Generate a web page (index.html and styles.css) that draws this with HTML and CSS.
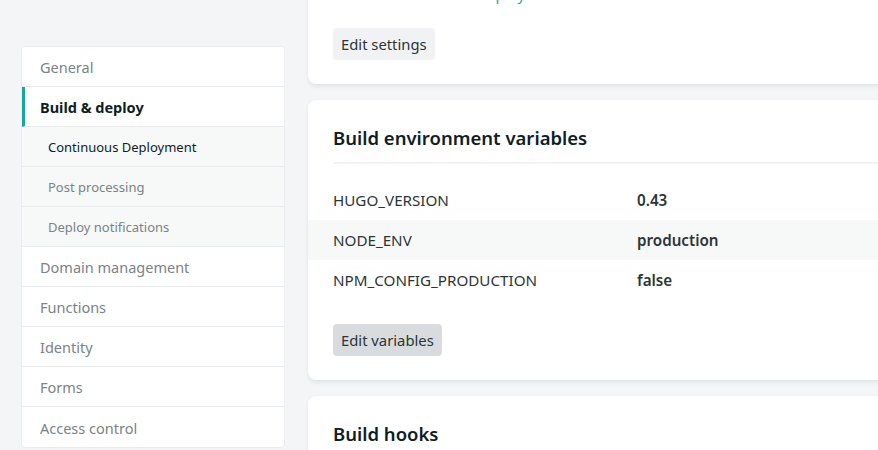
FILE: index.html
```html
<!DOCTYPE html>
<html lang="en">
<head>
<meta charset="utf-8">
<title>Build &amp; deploy settings</title>
<link rel="stylesheet" href="styles.css">
</head>
<body>
<div class="layout">
  <nav class="sidebar">
    <a class="nav-item">General</a>
    <a class="nav-item active">Build &amp; deploy</a>
    <a class="nav-sub current">Continuous Deployment</a>
    <a class="nav-sub">Post processing</a>
    <a class="nav-sub">Deploy notifications</a>
    <a class="nav-item">Domain management</a>
    <a class="nav-item">Functions</a>
    <a class="nav-item">Identity</a>
    <a class="nav-item">Forms</a>
    <a class="nav-item last">Access control</a>
  </nav>
  <main class="content">
    <section class="card card-top">
      <p class="top-line"><span class="plain">Main branch linked: </span><a class="link">deploy</a></p>
      <button class="btn">Edit settings</button>
    </section>
    <section class="card">
      <h2 class="card-title">Build environment variables</h2>
      <div class="vars">
        <div class="var-row"><span class="var-key">HUGO_VERSION</span><span class="var-val">0.43</span></div>
        <div class="var-row striped"><span class="var-key">NODE_ENV</span><span class="var-val">production</span></div>
        <div class="var-row"><span class="var-key">NPM_CONFIG_PRODUCTION</span><span class="var-val">false</span></div>
      </div>
      <button class="btn btn-hover">Edit variables</button>
    </section>
    <section class="card">
      <h2 class="card-title plain-title">Build hooks</h2>
    </section>
  </main>
</div>
</body>
</html>
```

FILE: styles.css
```css
html, body {
  margin: 0;
  padding: 0;
  height: 450px;
  overflow: hidden;
}
body {
  background: #f3f5f6;
  font-family: "Noto Sans", "Open Sans", sans-serif;
  color: #0e1e25;
}
.layout {
  display: flex;
  align-items: flex-start;
  gap: 24px;
  padding-left: 22px;
}
.sidebar {
  width: 262px;
  flex: none;
  margin-top: 47px;
  background: #fff;
  border-radius: 4px;
  box-shadow: 0 0 0 1px #eaeced;
  display: flex;
  flex-direction: column;
  overflow: hidden;
}
.nav-item, .nav-sub {
  display: flex;
  align-items: center;
  padding-top: 1px;
  box-sizing: border-box;
  height: 40px;
  border-bottom: 1px solid #e9ebec;
  text-decoration: none;
}
.nav-item {
  padding-left: 18px;
  font-size: 14.5px;
  color: #7a8387;
  background: #fff;
}
.nav-item.last { border-bottom: none; }
.nav-item.active {
  color: #0e1e25;
  font-weight: 700;
  padding-left: 15px;
  border-left: 3px solid #15a99d;
}
.nav-sub {
  padding-left: 26px;
  font-size: 13px;
  color: #7a8387;
  background: #f7f8f8;
}
.nav-sub.current { color: #0e1e25; }
.content {
  width: 640px;
  flex: none;
  display: flex;
  flex-direction: column;
  gap: 16px;
  margin-top: -16px;
}
.card {
  background: #fff;
  border-radius: 8px;
  box-shadow: 0 2px 4px rgba(14, 30, 37, 0.08);
  padding: 24px 0 24px 0;
}
.card-top {
  padding-top: 0;
  padding-bottom: 24px;
}
.top-line {
  margin: 0 0 24px 27px;
  font-size: 15px;
  line-height: 20px;
  height: 20px;
}
.plain { color: #0e1e25; }
.link { color: #15a99d; }
.btn {
  display: inline-block;
  margin-left: 25px;
  font-family: inherit;
  font-size: 14.8px;
  color: #2c3538;
  background: #f1f2f3;
  border: none;
  border-radius: 4px;
  height: 32px;
  padding: 0 8px;
  cursor: pointer;
}
.btn-hover { background: #d9dcdf; }
.card-title {
  margin: 0 0 0 25px;
  font-size: 18.5px;
  font-weight: 600;
  line-height: 28px;
  padding-bottom: 10px;
  border-bottom: 2px solid #f2f3f4;
}
.plain-title { border-bottom: none; }
.vars {
  margin: 16px 0 24px;
}
.var-row {
  display: flex;
  align-items: center;
  height: 40px;
  padding-left: 25px;
  font-size: 15.2px;
}
.var-row.striped { background: #f7f8f8; }
.var-key {
  width: 304px;
  color: #2c3538;
}
.var-val {
  font-weight: 600;
  color: #2c3538;
}
```
